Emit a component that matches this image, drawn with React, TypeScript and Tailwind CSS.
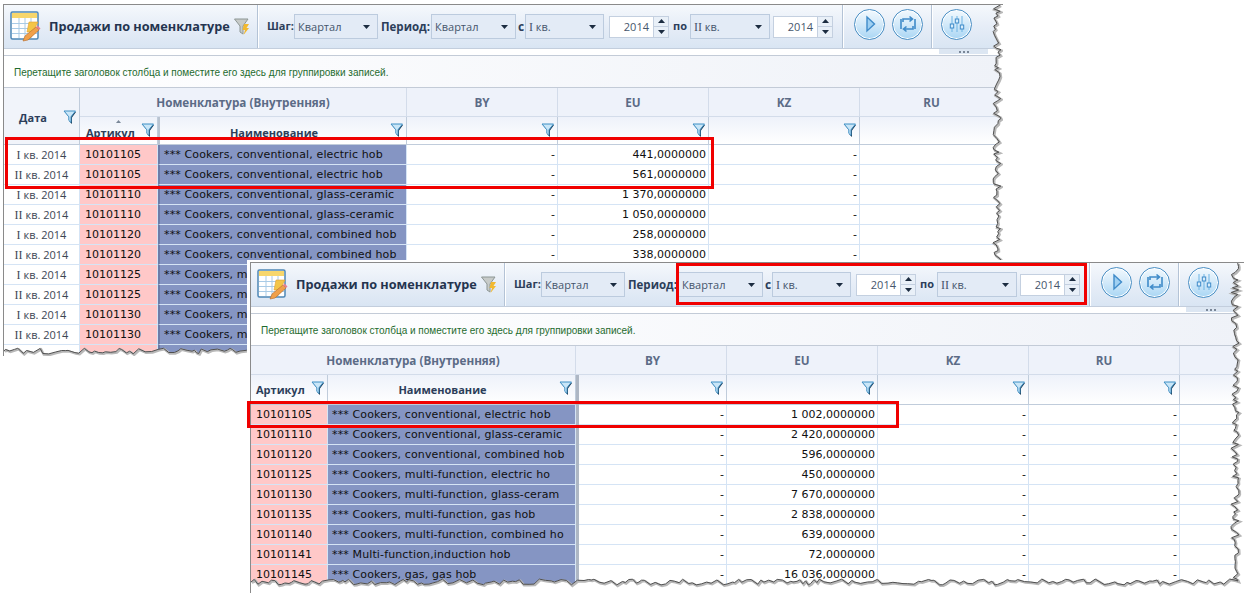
import type { ReactNode } from "react";

const ui = "font-[Open_Sans,sans-serif]";
const mono = "font-[DejaVu_Sans,sans-serif]";

function tearPath(w: number, h: number, seed: number) {
    let s = seed;
    const rnd = () => {
        s = (s * 9301 + 49297) % 233280;
        return s / 233280;
    };
    const pts: string[] = [];
    let y = 0;
    while (y < h) {
        pts.push(`${(w + (rnd() - 0.5) * 8).toFixed(1)},${y.toFixed(1)}`);
        y += 1.5 + rnd() * 2.5;
    }
    let x = w;
    while (x > 0) {
        pts.push(`${x.toFixed(1)},${(h + (rnd() - 0.5) * 6).toFixed(1)}`);
        x -= 2 + rnd() * 5;
    }
    pts.push(`0,${h}`);
    return pts;
}

function TornEdge({ w, h, seed }: { w: number; h: number; seed: number }) {
    const pts = tearPath(w, h, seed);
    const line = "M" + pts.join(" L");
    const fill = `${line} L0,${h + 30} L${w + 30},${h + 30} L${w + 30},0 Z`;
    return (
        <svg className="absolute inset-0 w-full h-full pointer-events-none">
            <path d={fill} fill="#ffffff" />
            <path d={line} fill="none" stroke="#b8b8b8" strokeWidth="2.5" transform="translate(1,1)" />
            <path d={line} fill="none" stroke="#505050" strokeWidth="1" />
        </svg>
    );
}

function FilterIcon() {
    return (
        <svg width="14" height="15" viewBox="0 0 14 15" className="shrink-0">
            <path d="M2 2 L13 2 L9 7.5 L9 14 L6.5 11.5 L6.5 7.5 Z" fill="#1d3a52" />
            <path d="M1 1 L12.5 1 L8 6.8 L8 12.5 L5.8 10.4 L5.8 6.8 Z" fill="#c9e6f8" stroke="#3f8fc4" strokeWidth="1" />
        </svg>
    );
}

function TableIcon() {
    return (
        <svg width="32" height="32" viewBox="0 0 32 32" className="shrink-0">
            <rect x="1" y="1" width="27" height="27" rx="1.5" fill="#ffffff" stroke="#4d86b5" strokeWidth="1.5" />
            <rect x="2" y="2" width="25" height="5" fill="#f7d66c" />
            <path d="M2 12.5H27 M2 17.5H27 M2 22.5H27 M9 7V27 M15 7V27 M21 7V27" stroke="#a9cbe6" strokeWidth="1" />
            <path d="M19 11 L28 11 L24 19 L28 19 L19 28 L20 21 L17 21 Z" fill="#f3c548" stroke="#e0a030" strokeWidth="0.6" />
            <path d="M13 30 L15 25 L26 16 L29 19 L18 29 Z" fill="#f0a04a" stroke="#b56a2a" strokeWidth="0.6" />
            <path d="M26 16 L29 19 L30.5 17.5 L27.5 14.5 Z" fill="#e77f8c" />
        </svg>
    );
}

function FunnelBolt() {
    return (
        <svg width="16" height="18" viewBox="0 0 16 18" className="shrink-0">
            <path d="M0.5 1 L14 1 L9 8 L9 16 L6 14 L6 8 Z" fill="#c7cbc9" stroke="#8d9694" strokeWidth="1" />
            <path d="M10 6 L15 6 L12.5 10 L15 10 L9.5 17 L11 12 L8.5 12 Z" fill="#f2b92f" />
        </svg>
    );
}

function RoundButton({ children }: { children: ReactNode }) {
    return (
        <div className="w-[31px] h-[31px] rounded-full border border-[#4a8fc4] bg-gradient-to-b from-[#f2f9fe] via-[#d2e9f9] to-[#a9d6f4] shadow-[inset_0_0_0_1px_#ffffff] flex items-center justify-center shrink-0">
            <svg width="20" height="20" viewBox="0 0 20 20">
                {children}
            </svg>
        </div>
    );
}

function Arrow({ up }: { up?: boolean }) {
    return (
        <svg width="7" height="4" viewBox="0 0 7 4">
            <path d={up ? "M0 4 L3.5 0 L7 4 Z" : "M0 0 L7 0 L3.5 4 Z"} fill="#1c2c40" />
        </svg>
    );
}

function Select({ value, width }: { value: ReactNode; width: string }) {
    return (
        <div className={`${width} h-[25px] shrink-0 border border-[#bccbde] bg-[#e3ebf6] flex items-center justify-between pl-[3px] pr-[7px] pt-[1px] text-[11px] text-[#46566c] ${ui}`}>
            <span>{value}</span>
            <Arrow />
        </div>
    );
}

function Spin() {
    return (
        <div className="w-[60px] h-[22px] shrink-0 flex border border-[#c4d0e0] bg-white">
            <div className={`flex-1 text-right pr-[4px] text-[11px] leading-[20px] text-[#46566c] ${ui}`}>2014</div>
            <div className="w-[15px] flex flex-col border-l border-[#c4d0e0] bg-[#e9f0f8]">
                <div className="flex-1 flex items-center justify-center border-b border-[#c4d0e0]"><Arrow up /></div>
                <div className="flex-1 flex items-center justify-center"><Arrow /></div>
            </div>
        </div>
    );
}

const Q1 = <span><span className="font-[Liberation_Serif,serif] text-[12px]">I</span> кв.</span>;
const Q2 = <span><span className="font-[Liberation_Serif,serif] text-[12px]">II</span> кв.</span>;

function Label({ children, width }: { children: ReactNode; width: string }) {
    return <span className={`block ${width} font-bold text-[#2c3e5a] shrink-0 whitespace-nowrap ${ui}`}>{children}</span>;
}

function Toolbar() {
    return (
        <>
            <div className="h-[44px] flex items-stretch bg-gradient-to-b from-[#f5f8fc] via-[#e6edf7] to-[#d9e5f3] border-b border-[#c3cedd]">
                <div className="w-[254px] shrink-0 flex items-center pl-[6px] border-r border-[#b4c3d6] shadow-[1px_0_0_#ffffff]">
                    <TableIcon />
                    <span className={`ml-[7px] text-[12.7px] font-bold text-[#24344f] whitespace-nowrap ${ui}`}>Продажи по номенклатуре</span>
                    <span className="ml-[4px]"><FunnelBolt /></span>
                </div>
                <div className="w-[585px] shrink-0 flex items-center border-r border-[#b4c3d6] shadow-[1px_0_0_#ffffff]">
                    <div className="ml-[9px]"><Label width="w-[26px] text-[11px]">Шаг:</Label></div>
                    <div className="ml-[1px]"><Select value="Квартал" width="w-[84px]" /></div>
                    <div className="ml-[3px]"><Label width="w-[49px] text-[11.5px]">Период:</Label></div>
                    <div className="ml-[1px]"><Select value="Квартал" width="w-[85px]" /></div>
                    <div className="ml-[2px]"><Label width="w-[7px] text-[12px]">с</Label></div>
                    <Select value={Q1} width="w-[79px]" />
                    <div className="ml-[5px]"><Spin /></div>
                    <div className="ml-[4px]"><Label width="w-[15px] text-[11px]">по</Label></div>
                    <div className="ml-[2px]"><Select value={Q2} width="w-[80px]" /></div>
                    <div className="ml-[3px]"><Spin /></div>
                </div>
                <div className="w-[89px] shrink-0 flex items-center pl-[11px] gap-[7px] border-r border-[#b4c3d6] shadow-[1px_0_0_#ffffff] pb-[5px]">
                    <RoundButton>
                        <path d="M7 3 L14.5 10 L7 17 Z" fill="#9fd0f2" stroke="#3f8bc9" strokeWidth="1.4" />
                    </RoundButton>
                    <RoundButton>
                        <path d="M5 8 V5 H14 M11.5 2.5 L14.5 5 L11.5 7.5 M15 12 V15 H6 M8.5 12.5 L5.5 15 L8.5 17.5 M3 5 V15 M17 5 V15" fill="none" stroke="#3f8bc9" strokeWidth="1.6" />
                    </RoundButton>
                </div>
                <div className="flex-1 flex items-center pl-[9px] pb-[5px]">
                    <RoundButton>
                        <path d="M5 2 V18 M10 2 V18 M15 2 V18" stroke="#6db3e3" strokeWidth="1" />
                        <rect x="3.3" y="10" width="3.4" height="4" fill="#d8edfb" stroke="#3f8bc9" />
                        <rect x="8.3" y="5" width="3.4" height="4" fill="#d8edfb" stroke="#3f8bc9" />
                        <rect x="13.3" y="11" width="3.4" height="4" fill="#d8edfb" stroke="#3f8bc9" />
                    </RoundButton>
                </div>
            </div>
            <div className="h-[7px] bg-white border-b border-[#c3cbd7]">
                <div className="ml-[935px] w-[49px] h-[5px] bg-[#dce6f2] flex items-center justify-center gap-[2px]">
                    <div className="w-[2px] h-[2px] bg-[#7a8798]" />
                    <div className="w-[2px] h-[2px] bg-[#7a8798]" />
                    <div className="w-[2px] h-[2px] bg-[#7a8798]" />
                </div>
            </div>
            <div className="h-[32px] flex items-center pl-[10px] pt-[2px] bg-gradient-to-r from-white to-[#eff2f8] border-b border-[#c3cbd7] text-[10px] text-[#1e6b2e] font-[Liberation_Sans,sans-serif]">
                Перетащите заголовок столбца и поместите его здесь для группировки записей.
            </div>
        </>
    );
}

const groupCell = `h-[29px] flex items-center justify-center pt-[2px] bg-[#eef2fa] border-r border-b border-[#d3dcea] text-[11.7px] font-bold text-[#5b6b86] ${ui}`;
const cellBase = "h-[20px] flex items-center border-r border-b border-[#d5e4f5] text-[11px] text-[#101010] overflow-hidden whitespace-nowrap";
const numCell = `${cellBase} pt-[2px] justify-end pr-[2px] bg-white ${mono}`;
const artCell = `${cellBase} pt-[2px] pl-[5px] bg-[#ffc8c8] ${mono}`;
const nameCell = `${cellBase} pt-[2px] pl-[4px] bg-[#8595c3] border-[#7a8bbb] tracking-[0.13px] ${mono}`;

function HeaderTitle({ children, box, align }: { children: string; box: string; align: string }) {
    return (
        <div className={`${box} ${align} relative flex items-start text-[11px] bg-gradient-to-b from-[#eef2fa] to-white border-r border-b border-[#c0ccdb] font-bold text-[#2c3e5a] ${ui}`}>
            {children}
            <span className="absolute right-[2px] top-[6px]"><FilterIcon /></span>
        </div>
    );
}

function FilterCell({ height }: { height: string }) {
    return (
        <div className={`${height} flex items-start justify-end pr-[2px] pt-[6px] bg-gradient-to-b from-[#eef2fa] to-white border-r border-b border-[#c0ccdb]`}>
            <FilterIcon />
        </div>
    );
}

const rowsOne: [string, string, string][] = [
    ["10101105", "*** Cookers, conventional, electric hob", "441,0000000"],
    ["10101105", "*** Cookers, conventional, electric hob", "561,0000000"],
    ["10101110", "*** Cookers, conventional, glass-ceramic", "1 370,0000000"],
    ["10101110", "*** Cookers, conventional, glass-ceramic", "1 050,0000000"],
    ["10101120", "*** Cookers, conventional, combined hob", "258,0000000"],
    ["10101120", "*** Cookers, conventional, combined hob", "338,0000000"],
];

// the rest of the back table sits behind the front window
const coveredOne = ["10101125", "10101125", "10101130", "10101130"];

const rowsTwo: [string, string, string][] = [
    ["10101105", "*** Cookers, conventional, electric hob", "1 002,0000000"],
    ["10101110", "*** Cookers, conventional, glass-ceramic", "2 420,0000000"],
    ["10101120", "*** Cookers, conventional, combined hob", "596,0000000"],
    ["10101125", "*** Cookers, multi-function, electric ho", "450,0000000"],
    ["10101130", "*** Cookers, multi-function, glass-ceram", "7 670,0000000"],
    ["10101135", "*** Cookers, multi-function, gas hob", "2 838,0000000"],
    ["10101140", "*** Cookers, multi-function, combined ho", "639,0000000"],
    ["10101141", "*** Multi-function,induction hob", "72,0000000"],
    ["10101145", "*** Cookers, gas, gas hob", "16 036,0000000"],
];

function DateCell({ second }: { second: boolean }) {
    return (
        <div className={`${cellBase} pt-[1px] justify-center bg-white ${ui}`}>
            <span className="text-[#3c4654]">{second ? Q2 : Q1} 2014</span>
        </div>
    );
}

function FirstGrid() {
    return (
        <div className="grid grid-cols-[76px_78px_249px_151px_151px_151px_1fr]">
            <div className={`row-span-2 relative flex items-center justify-center pr-[17px] pt-[4px] bg-[#f1f4fa] border-r border-b border-[#c0ccdb] text-[11px] font-bold text-[#2c3e5a] ${ui}`}>
                Дата
                <span className="absolute right-[2px] top-[22px]"><FilterIcon /></span>
            </div>
            <div className={`col-span-2 ${groupCell}`}>Номенклатура (Внутренняя)</div>
            <div className={groupCell}>BY</div>
            <div className={groupCell}>EU</div>
            <div className={groupCell}>KZ</div>
            <div className={`${groupCell} border-r-0`}>RU</div>
            <div className="relative">
                <HeaderTitle box="h-[28px] pt-[8px]" align="justify-start pl-[6px]">Артикул</HeaderTitle>
                <svg width="5" height="3" viewBox="0 0 5 3" className="absolute left-[36px] top-[3px]">
                    <path d="M0 3 L2.5 0 L5 3 Z" fill="#7a8798" />
                </svg>
            </div>
            <div className="border-l-[2px] border-[#b9c3d0]">
                <HeaderTitle box="h-[28px] pt-[8px]" align="justify-center pr-[18px]">Наименование</HeaderTitle>
            </div>
            <FilterCell height="h-[28px]" />
            <FilterCell height="h-[28px]" />
            <FilterCell height="h-[28px]" />
            <div className="h-[28px] bg-gradient-to-b from-[#eef2fa] to-white border-b border-[#c0ccdb]" />
            {rowsOne.map(([art, name, eu], i) => (
                <div key={i} className="contents">
                    <DateCell second={i % 2 === 1} />
                    <div className={artCell}>{art}</div>
                    <div className={`${nameCell} border-l-[2px] border-l-[#6c7ca8]`}>{name}</div>
                    <div className={numCell}>-</div>
                    <div className={numCell}>{eu}</div>
                    <div className={numCell}>-</div>
                    <div className={`${numCell} border-r-0`} />
                </div>
            ))}
            {coveredOne.map((art, i) => (
                <div key={i} className="contents">
                    <DateCell second={i % 2 === 1} />
                    <div className={artCell}>{art}</div>
                    <div className={`${nameCell} border-l-[2px] border-l-[#6c7ca8]`}>*** Cookers, m</div>
                    <div className={numCell} />
                    <div className={numCell} />
                    <div className={numCell} />
                    <div className={`${numCell} border-r-0`} />
                </div>
            ))}
            <div className={`${cellBase} bg-white`} />
            <div className={`${cellBase} bg-[#ffc8c8]`} />
            <div className={`${cellBase} bg-[#8595c3] border-l-[2px] border-l-[#6c7ca8]`} />
            <div className={`${cellBase} bg-white`} />
            <div className={`${cellBase} bg-white`} />
            <div className={`${cellBase} bg-white`} />
            <div className={`${cellBase} bg-white border-r-0`} />
        </div>
    );
}

function SecondGrid() {
    return (
        <div className="grid grid-cols-[77px_248px_3px_148px_151px_151px_151px_1fr]">
            <div className={`col-span-2 ${groupCell}`}>Номенклатура (Внутренняя)</div>
            <div className="bg-[#eef2fa] border-b border-[#d3dcea]" />
            <div className={groupCell}>BY</div>
            <div className={groupCell}>EU</div>
            <div className={groupCell}>KZ</div>
            <div className={groupCell}>RU</div>
            <div className={`${groupCell} border-r-0`} />
            <HeaderTitle box="h-[30px] pt-[7px]" align="justify-start pl-[5px]">Артикул</HeaderTitle>
            <HeaderTitle box="h-[30px] pt-[7px]" align="justify-center pr-[18px]">Наименование</HeaderTitle>
            <div className="bg-[#aeb7c4]" />
            <FilterCell height="h-[30px]" />
            <FilterCell height="h-[30px]" />
            <FilterCell height="h-[30px]" />
            <FilterCell height="h-[30px]" />
            <div className="h-[30px] bg-gradient-to-b from-[#eef2fa] to-white border-b border-[#c0ccdb]" />
            {rowsTwo.map(([art, name, eu], i) => (
                <div key={i} className="contents">
                    <div className={artCell}>{art}</div>
                    <div className={nameCell}>{name}</div>
                    <div className="bg-[#aeb7c4]" />
                    <div className={numCell}>-</div>
                    <div className={numCell}>{eu}</div>
                    <div className={numCell}>-</div>
                    <div className={numCell}>-</div>
                    <div className={`${numCell} border-r-0`} />
                </div>
            ))}
        </div>
    );
}

export default function App() {
    return (
        <div className="relative w-[1244px] h-[593px] bg-white overflow-hidden">
            {/* back window */}
            <div className="absolute left-[3px] top-[4px] w-[1000px] h-[352px] overflow-hidden border-l border-t border-[#8a8a8a] bg-white">
                <Toolbar />
                <FirstGrid />
                <TornEdge w={993} h={346} seed={17} />
            </div>

            {/* front window with its white halo */}
            <div className="absolute left-[247px] top-[260px] w-[997px] h-[333px] bg-white pl-[3px] pt-[2px]">
                <div className="relative w-[994px] h-[331px] overflow-hidden border-l border-t border-[#8a8a8a] bg-white">
                    <Toolbar />
                    <SecondGrid />
                    <TornEdge w={984} h={319} seed={91} />
                </div>
            </div>

            {/* red callouts */}
            <div className="absolute left-[5px] top-[137px] w-[709px] h-[52px] border-[3px] border-[#f00000]" />
            <div className="absolute left-[676px] top-[263px] w-[411px] h-[42px] border-[3px] border-[#f00000]" />
            <div className="absolute left-[247px] top-[401px] w-[652px] h-[27px] border-[3px] border-[#f00000]" />
        </div>
    );
}
